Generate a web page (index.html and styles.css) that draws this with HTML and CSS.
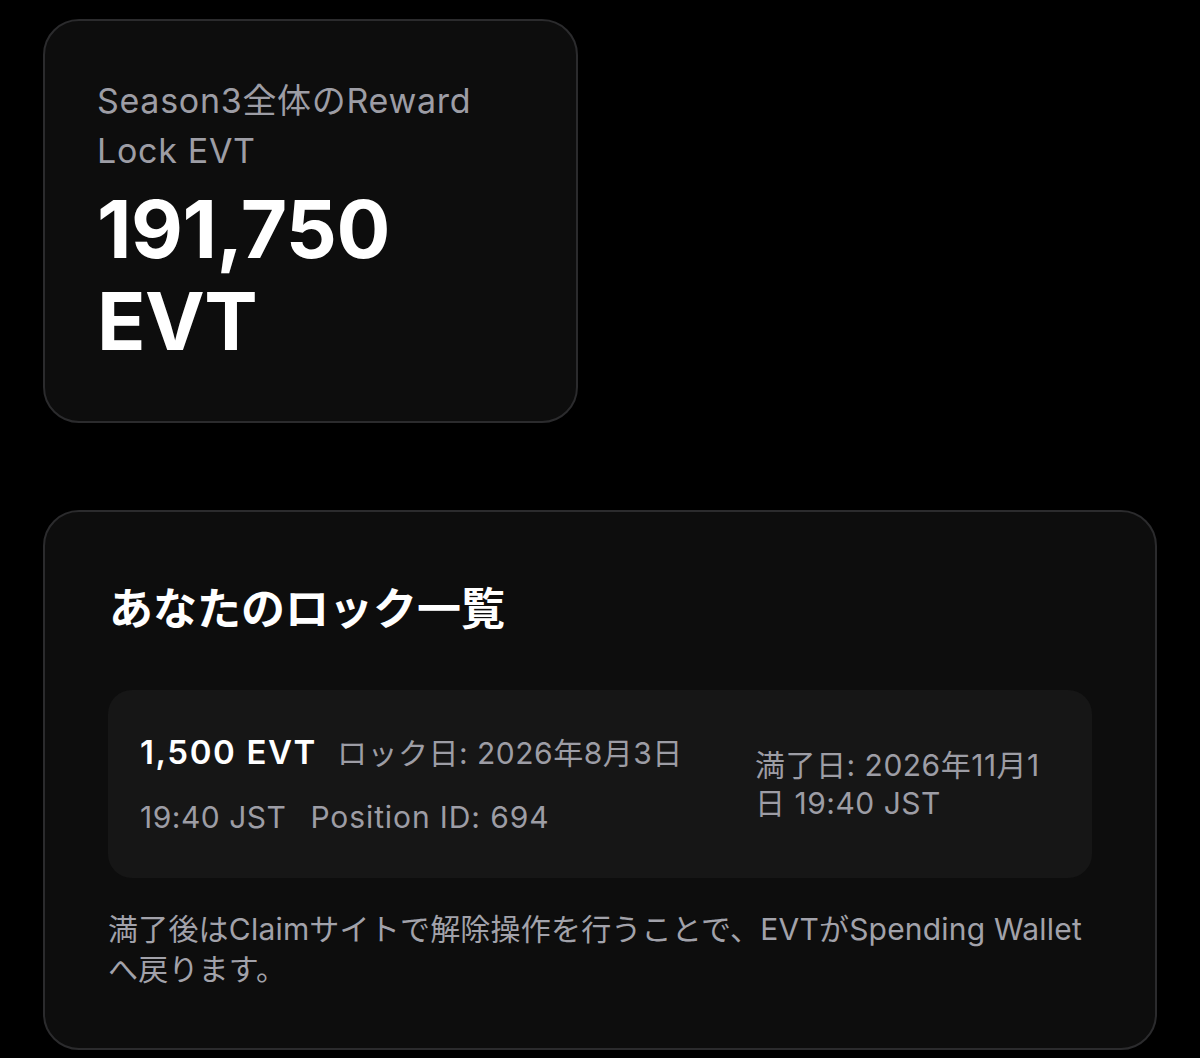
FILE: index.html
```html
<!DOCTYPE html>
<html lang="ja">
<head>
<meta charset="utf-8">
<title>Lock EVT</title>
<link rel="stylesheet" href="styles.css">
</head>
<body>
  <section class="card card-total">
    <div class="label">Season3全体のReward<br>Lock EVT</div>
    <div class="total">191,750<br>EVT</div>
  </section>

  <section class="card card-locks">
    <h2 class="title">あなたのロック一覧</h2>
    <div class="lock-row">
      <div class="lock-main"><span class="amount">1,500 EVT</span><span class="meta">ロック日: 2026年8月3日 19:40 JST</span><span class="meta pos">Position ID: 694</span></div>
      <div class="lock-end">満了日: 2026年11月1日 19:40 JST</div>
    </div>
    <p class="note">満了後はClaimサイトで解除操作を行うことで、EVTがSpending Walletへ戻ります。</p>
  </section>
</body>
</html>
```

FILE: styles.css
```css
* { box-sizing: border-box; }
html, body { background: #000; }
body {
  margin: 0;
  padding: 19px 43px 0;
  font-family: Inter, "Noto Sans CJK JP", sans-serif;
  color: #fff;
}
.card {
  background: #0d0d0d;
  border: 2px solid #2b2b2d;
  border-radius: 36px;
}
.card-total {
  width: 535px;
  height: 404px;
  padding: 55px 52px 0;
}
.label {
  color: #9d9da5;
  font-size: 34px;
  line-height: 50px;
  letter-spacing: 0.7px;
}
.total {
  margin-top: 7px;
  font-size: 80px;
  font-weight: 700;
  line-height: 92px;
  letter-spacing: -0.5px;
}
.card-locks {
  margin-top: 87px;
  height: 540px;
  padding: 67px 63px 0;
}
.title {
  margin: 0;
  font-size: 44px;
  font-weight: 700;
  line-height: 60px;
  padding-left: 1px;
}
.lock-row {
  margin-top: 51px;
  height: 188px;
  background: #161616;
  border-radius: 24px;
  padding: 0 32px;
  display: flex;
  align-items: center;
  gap: 30px;
}
.lock-main {
  flex: 0 0 585px;
  line-height: 64px;
  color: #9d9da5;
  font-size: 30px;
  letter-spacing: 0.5px;
}
.amount {
  color: #fff;
  font-size: 33px;
  font-weight: 600;
  letter-spacing: 1.6px;
  margin-right: 20px;
}
.pos { margin-left: 24px; letter-spacing: 0.9px; }
.lock-end {
  flex: 1;
  color: #9d9da5;
  font-size: 30px;
  line-height: 38px;
  letter-spacing: 0.5px;
}
.note {
  margin: 31px 0 0;
  color: #a2a2aa;
  font-size: 30px;
  line-height: 40px;
  letter-spacing: 0.2px;
}
```
